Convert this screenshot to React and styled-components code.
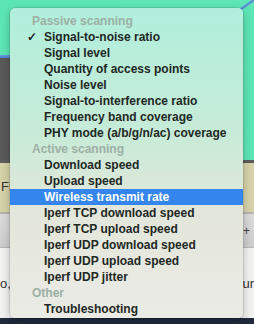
import styled, { createGlobalStyle } from "styled-components";

const GlobalStyle = createGlobalStyle`
  html, body { margin: 0; padding: 0; }
  body {
    width: 254px;
    height: 324px;
    overflow: hidden;
    font-family: "Liberation Sans", Arial, sans-serif;
  }
`;

const sections = [
  {
    title: "Passive scanning",
    items: [
      "Signal-to-noise ratio",
      "Signal level",
      "Quantity of access points",
      "Noise level",
      "Signal-to-interference ratio",
      "Frequency band coverage",
      "PHY mode (a/b/g/n/ac) coverage",
    ],
  },
  {
    title: "Active scanning",
    items: [
      "Download speed",
      "Upload speed",
      "Wireless transmit rate",
      "Iperf TCP download speed",
      "Iperf TCP upload speed",
      "Iperf UDP download speed",
      "Iperf UDP upload speed",
      "Iperf UDP jitter",
    ],
  },
  { title: "Other", items: ["Troubleshooting"] },
];

const checked = "Signal-to-noise ratio";
const selected = "Wireless transmit rate";

const App = () => {
  return (
    <>
      <GlobalStyle />
      <Stage>
        <Top>
          <LeftPane>
            <Green />
            <BlueRule />
            <DarkGray />
          </LeftPane>
          <RightPane>
            <Diagonal viewBox="0 0 20 14" width="20" height="14">
              <line x1="0" y1="14" x2="20" y2="0" stroke="#5b8fd6" strokeWidth="2.5" />
            </Diagonal>
          </RightPane>
        </Top>
        <RightEdge />
        <Khaki>
          <BgText>Fi</BgText>
        </Khaki>
        <Toolbar>
          <Plus>+</Plus>
        </Toolbar>
        <Content>
          <BgText>o,</BgText>
          <BgText>ur</BgText>
        </Content>
        <Dock />

        <Menu>
          {sections.map((s) => (
            <div key={s.title}>
              <Header>{s.title}</Header>
              {s.items.map((item) => (
                <Item key={item} $active={item === selected}>
                  <Check>{item === checked ? "✓" : ""}</Check>
                  {item}
                </Item>
              ))}
            </div>
          ))}
        </Menu>
      </Stage>
    </>
  );
};

const Stage = styled.div`
  position: relative;
  width: 254px;
  height: 324px;
  display: flex;
  flex-direction: column;
  overflow: hidden;
`;

const Top = styled.div`
  height: 160px;
  display: flex;
`;

const LeftPane = styled.div`
  width: 120px;
  display: flex;
  flex-direction: column;
`;

const Green = styled.div`
  height: 55px;
  background: #5de6b5;
`;

const BlueRule = styled.div`
  height: 3px;
  background: linear-gradient(#6d9fe0, #4b7fcf);
`;

const DarkGray = styled.div`
  flex: 1;
  background: #5a5a5a;
`;

const RightPane = styled.div`
  flex: 1;
  position: relative;
  background: #5ee6b6;
`;

const Diagonal = styled.svg`
  position: absolute;
  right: 0;
  top: 0;
`;

const RightEdge = styled.div`
  height: 3px;
  background: #5c5c5c;
`;

const Khaki = styled.div`
  height: 51px;
  box-sizing: border-box;
  background: #d6d3aa;
  border-bottom: 2px solid #b5b5ae;
  display: flex;
  align-items: flex-start;
  padding: 17px 0 0 1px;
`;

const Toolbar = styled.div`
  height: 34px;
  box-sizing: border-box;
  background: linear-gradient(#dcdcdc, #cdcdcd);
  border-bottom: 1px solid #b9b9b9;
  display: flex;
  justify-content: flex-end;
  align-items: center;
  padding-right: 4px;
`;

const Plus = styled.span`
  font-size: 12px;
  color: #444;
`;

const Content = styled.div`
  flex: 1;
  background: #f2f2f0;
  display: flex;
  justify-content: space-between;
  align-items: flex-start;
  padding-top: 29px;
`;

const BgText = styled.span`
  font-size: 13px;
  color: #333;
  line-height: 14px;
`;

const Dock = styled.div`
  height: 6px;
  background: #1f2a3d;
`;

const Menu = styled.div`
  position: absolute;
  left: 10px;
  top: 8px;
  width: 233px;
  height: 310px;
  box-sizing: border-box;
  padding-top: 5px;
  border-radius: 5px;
  background: linear-gradient(#b0efdc 0%, #c7ebd8 40%, #e3e6da 65%, #ebebe6 100%);
  box-shadow: 0 0 0 0.5px rgba(0, 0, 0, 0.18), 0 3px 10px rgba(0, 0, 0, 0.25);
  overflow: hidden;
`;

const Header = styled.div`
  height: 16px;
  line-height: 16px;
  padding-left: 22px;
  font-size: 12px;
  font-weight: 700;
  color: #9cb0a6;
`;

const Item = styled.div`
  height: 16px;
  line-height: 16px;
  display: flex;
  font-size: 12px;
  font-weight: 700;
  color: ${(p) => (p.$active ? "#ffffff" : "#1e2824")};
  background: ${(p) => (p.$active ? "#3486ee" : "transparent")};
`;

const Check = styled.span`
  width: 34px;
  padding-left: 17px;
  box-sizing: border-box;
  flex: none;
`;

export default App;
